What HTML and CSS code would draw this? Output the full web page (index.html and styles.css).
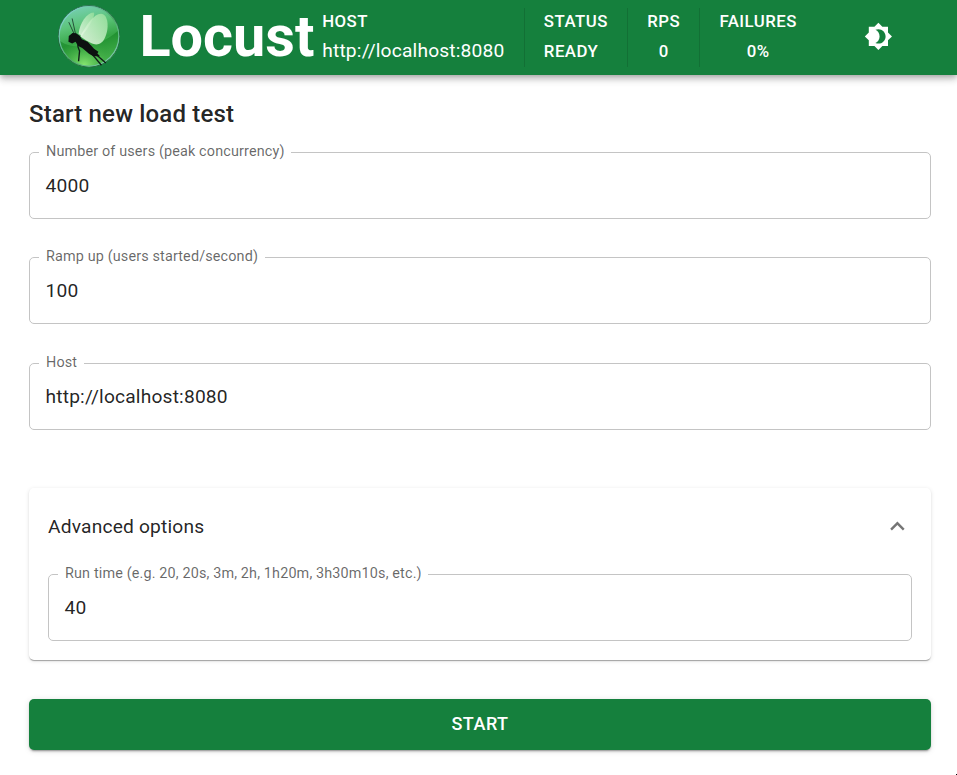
FILE: index.html
```html
<!DOCTYPE html>
<html lang="en">
<head>
<meta charset="utf-8">
<title>Locust</title>
<link rel="stylesheet" href="styles.css">
</head>
<body>
<header class="appbar">
  <div class="brand">
    <svg class="logo" viewBox="25 15 184 187" aria-hidden="true">
      <defs>
        <linearGradient id="orb" x1="0" y1="0" x2="0.25" y2="1">
          <stop offset="0" stop-color="#7fd3c4"/>
          <stop offset=".38" stop-color="#5cc47a"/>
          <stop offset=".65" stop-color="#35a545"/>
          <stop offset="1" stop-color="#6fd86e"/>
        </linearGradient>
        <radialGradient id="glow" cx=".42" cy=".98" r=".5">
          <stop offset="0" stop-color="#9af57c"/>
          <stop offset="1" stop-color="#2b9a35" stop-opacity="0"/>
        </radialGradient>
        <linearGradient id="rim" x1="0" y1="0" x2="1" y2="1">
          <stop offset="0" stop-color="#8fe0e6"/>
          <stop offset=".55" stop-color="#4aa866"/>
          <stop offset="1" stop-color="#8bd8c6"/>
        </linearGradient>
        <linearGradient id="wing" x1="1" y1="0" x2="0" y2="1">
          <stop offset="0" stop-color="#98e09c"/>
          <stop offset="1" stop-color="#f4fdf0"/>
        </linearGradient>
      </defs>
      <circle cx="117" cy="108" r="92" fill="url(#orb)"/>
      <path d="M28 119C62 151 148 143 204 91C216 157 166 201 117 199C67 198 28 160 28 119Z" fill="#087719" opacity=".42"/>
      <circle cx="117" cy="108" r="90" fill="url(#glow)" opacity=".8"/>
      <circle cx="117" cy="108" r="91" fill="none" stroke="#1b4f38" stroke-width="2.5"/>
      <circle cx="117" cy="108" r="88.5" fill="none" stroke="url(#rim)" stroke-width="3.5"/>
      <path d="M86 101C89 68 111 38 130 37C139 39 121 76 96 106Z" fill="url(#wing)" opacity=".8"/>
      <path d="M91 108C108 77 130 41 153 41C174 42 178 83 164 113C149 144 124 133 91 108Z" fill="url(#wing)" opacity=".85"/>
      <path d="M73 101L57 66M77 101L67 55" fill="none" stroke="#1c3b2c" stroke-width="2.5"/>
      <path d="M87 122Q80 134 89 151L86 182M121 155L154 194M132 157L167 187" fill="none" stroke="#101c18" stroke-width="4"/>
      <path d="M57 107L68 98L79 99L90 107L96 117L113 124L132 145L145 154L142 159L150 167L130 167L117 160L97 143L85 137L77 124L67 129L56 124Z" fill="#0c1010"/>
    </svg>
    <span class="wordmark">Locust</span>
  </div>
  <div class="stats">
    <div class="stat host"><span class="stat-title">HOST</span><span class="url">http://localhost:8080</span></div>
    <div class="stat"><span class="stat-title">STATUS</span><span class="stat-title">READY</span></div>
    <div class="stat center"><span class="stat-title">RPS</span><span class="stat-title">0</span></div>
    <div class="stat center"><span class="stat-title">FAILURES</span><span class="stat-title">0%</span></div>
  </div>
  <svg class="theme-icon" viewBox="0 0 24 24" fill="currentColor" aria-hidden="true"><path d="M20 8.69V4h-4.69L12 .69 8.69 4H4v4.69L.69 12 4 15.31V20h4.69L12 23.31 15.31 20H20v-4.69L23.31 12 20 8.69zM12 18c-.89 0-1.74-.2-2.5-.55C11.56 16.5 13 14.42 13 12s-1.44-4.5-3.5-5.45C10.26 6.2 11.11 6 12 6c3.31 0 6 2.69 6 6s-2.69 6-6 6z"/></svg>
</header>
<main class="content">
  <h1 class="title">Start new load test</h1>
  <div class="fields">
    <fieldset class="field"><legend>Number of users (peak concurrency)</legend><div class="value">4000</div></fieldset>
    <fieldset class="field ramp"><legend>Ramp up (users started/second)</legend><div class="value">100</div></fieldset>
    <fieldset class="field"><legend>Host</legend><div class="value">http://localhost:8080</div></fieldset>
  </div>
  <section class="accordion">
    <div class="summary"><span>Advanced options</span>
      <svg class="chevron" viewBox="0 0 24 24" fill="currentColor" aria-hidden="true"><path d="M12 8l-6 6 1.41 1.41L12 10.83l4.59 4.58L18 14z"/></svg>
    </div>
    <fieldset class="field"><legend>Run time (e.g. 20, 20s, 3m, 2h, 1h20m, 3h30m10s, etc.)</legend><div class="value">40</div></fieldset>
  </section>
  <button class="start" type="button">START</button>
</main>
</body>
</html>
```
FILE: styles.css
```css
* { box-sizing: border-box; }
body {
  margin: 0;
  height: 775px;
  overflow: hidden;
  background: #fff;
  color: rgba(0, 0, 0, .87);
  font: 400 19.2px/28.8px Roboto, sans-serif;
  letter-spacing: .18px;
}
.appbar {
  display: flex;
  align-items: center;
  height: 75px;
  padding: 0 64px 0 58px;
  background: #15803d;
  color: #fff;
  box-shadow: 0 2px 5px -1px rgba(0,0,0,.2), 0 5px 6px rgba(0,0,0,.14), 0 1px 12px rgba(0,0,0,.12);
}
.brand { display: flex; align-items: center; width: 264.2px; flex: none; padding-bottom: 2px; }
.logo { width: 62px; height: 63px; margin-right: 19.4px; flex: none; }
.wordmark { font-size: 57.6px; font-weight: 700; line-height: 67px; letter-spacing: 0; }
.stats { display: flex; padding-bottom: 1px; }
.stat {
  display: flex;
  flex-direction: column;
  height: 59px;
  padding: 0 19.2px;
  border-left: 1px solid rgba(0,0,0,.12);
}
.stat.host { padding-left: 0; border-left: 0; }
.stat.center { align-items: center; }
.stat-title { font-size: 16.8px; font-weight: 500; line-height: 30px; letter-spacing: .48px; }
.stat-title:first-child { margin-top: -2px; }
.url { line-height: 30px; }
.theme-icon { width: 28.8px; height: 28.8px; margin-left: auto; margin-top: -2px; }
.content { padding: 24px 26px 0 29px; }
.title { margin: 0; font-size: 24px; font-weight: 500; line-height: 30px; letter-spacing: .18px; }
.fields { display: flex; flex-direction: column; gap: 28px; padding-top: 13px; }
.field {
  min-width: 0;
  height: 77px;
  margin: 0;
  padding: 0 16px 0 9px;
  border: 1px solid #c4c4c4;
  border-radius: 5px;
}
.ramp { margin-bottom: 1px; }
.field legend {
  height: 20px;
  padding: 0 6.4px 0 7px;
  color: rgba(0,0,0,.6);
  font-size: 14.4px;
  line-height: 20px;
  letter-spacing: .144px;
}
.value { padding: 10px 0 0 6.5px; }
.accordion {
  height: 172px;
  margin-top: 58px;
  padding: 0 19px;
  border-radius: 5px;
  box-shadow: 0 2px 1px -1px rgba(0,0,0,.2), 0 1px 1px rgba(0,0,0,.14), 0 1px 4px rgba(0,0,0,.12);
}
.summary { display: flex; align-items: center; justify-content: space-between; height: 76px; }
.summary span { padding-top: 2px; }
.chevron { width: 28.8px; height: 28.8px; color: rgba(0,0,0,.54); }
.start {
  display: block;
  width: 100%;
  height: 51px;
  margin-top: 39px;
  padding: 0 0 2px;
  border: 0;
  border-radius: 5px;
  background: #15803d;
  color: #fff;
  font: 500 18px/31px Roboto, sans-serif;
  letter-spacing: .5px;
  box-shadow: 0 3px 1px -2px rgba(0,0,0,.2), 0 2px 2px rgba(0,0,0,.14), 0 1px 6px rgba(0,0,0,.12);
}
body::after {
  content: "";
  position: absolute;
  right: 0;
  bottom: 0;
  width: 1px;
  height: 1px;
  background: #000;
}
```
